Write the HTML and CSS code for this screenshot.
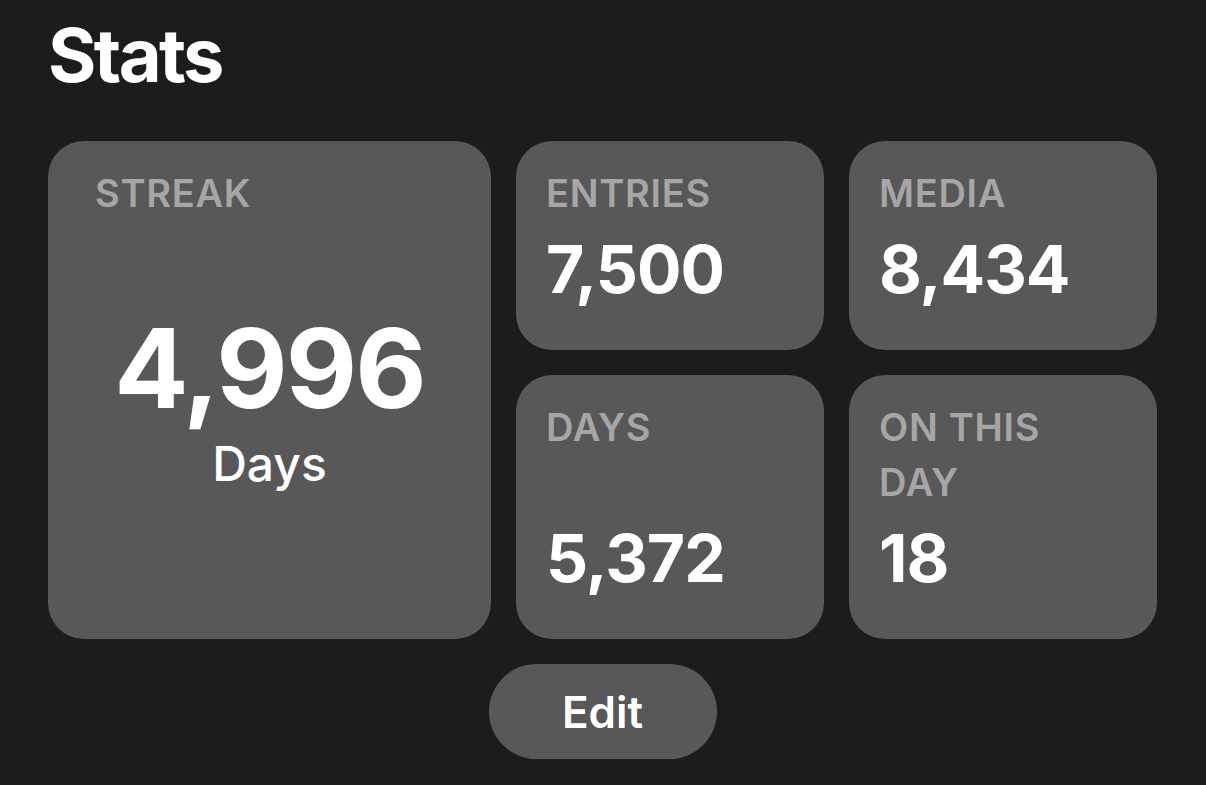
FILE: index.html
```html
<!DOCTYPE html>
<html lang="en">
<head>
    <meta charset="UTF-8">
    <meta name="viewport" content="width=device-width, initial-scale=1.0">
    <title>Stats</title>
    <link rel="stylesheet" href="styles.css">
</head>
<body>
    <div class="page">
        <h1 class="title">Stats</h1>

        <div class="grid">
            <div class="card streak">
                <div class="label">STREAK</div>
                <div class="bigNum">4,996</div>
                <div class="unit">Days</div>
            </div>
            <div class="card">
                <div class="label">ENTRIES</div>
                <div class="num">7,500</div>
            </div>
            <div class="card">
                <div class="label">MEDIA</div>
                <div class="num">8,434</div>
            </div>
            <div class="card spread">
                <div class="label">DAYS</div>
                <div class="num">5,372</div>
            </div>
            <div class="card spread">
                <div class="label">ON THIS<br>DAY</div>
                <div class="num">18</div>
            </div>
        </div>

        <div class="btnRow">
            <button class="editBtn">Edit</button>
        </div>
    </div>
</body>
</html>
```

FILE: styles.css
```css
body {
    margin: 0;
    background-color: #1c1c1e;
    font-family: Inter, "Noto Sans", sans-serif;
    color: #ffffff;
}
.page {
    padding: 18px 49px 0 48px;
}
.title {
    margin: 0 0 49px 0;
    font-size: 74px;
    line-height: 1;
    font-weight: 700;
    letter-spacing: -2.6px;
}

.grid {
    display: grid;
    grid-template-columns: 443px 1fr 1fr;
    gap: 25px;
}
.card {
    background-color: #585858;
    border-radius: 36px;
    padding: 25px 30px 48px 30px;
    display: flex;
    flex-direction: column;
}
.streak {
    grid-row: span 2;
    padding-left: 47px;
    padding-right: 47px;
}
.spread {
    justify-content: space-between;
}

.label {
    font-size: 38px;
    line-height: 55px;
    font-weight: 600;
    color: #a6a6a6;
    letter-spacing: 0.7px;
}
.num {
    margin-top: 15px;
    font-size: 66px;
    line-height: 1;
    font-weight: 700;
    letter-spacing: -1px;
}
.bigNum {
    margin-top: 92px;
    font-size: 110px;
    line-height: 1;
    font-weight: 700;
    letter-spacing: -2px;
    text-align: center;
}
.unit {
    margin-top: 12px;
    font-size: 48px;
    line-height: 1.2;
    font-weight: 500;
    text-align: center;
}

.btnRow {
    display: flex;
    justify-content: center;
    padding-top: 25px;
}
.editBtn {
    width: 228px;
    height: 95px;
    border: none;
    border-radius: 48px;
    background-color: #585858;
    color: #ffffff;
    font-family: Inter, "Noto Sans", sans-serif;
    font-size: 44px;
    font-weight: 600;
}
```
